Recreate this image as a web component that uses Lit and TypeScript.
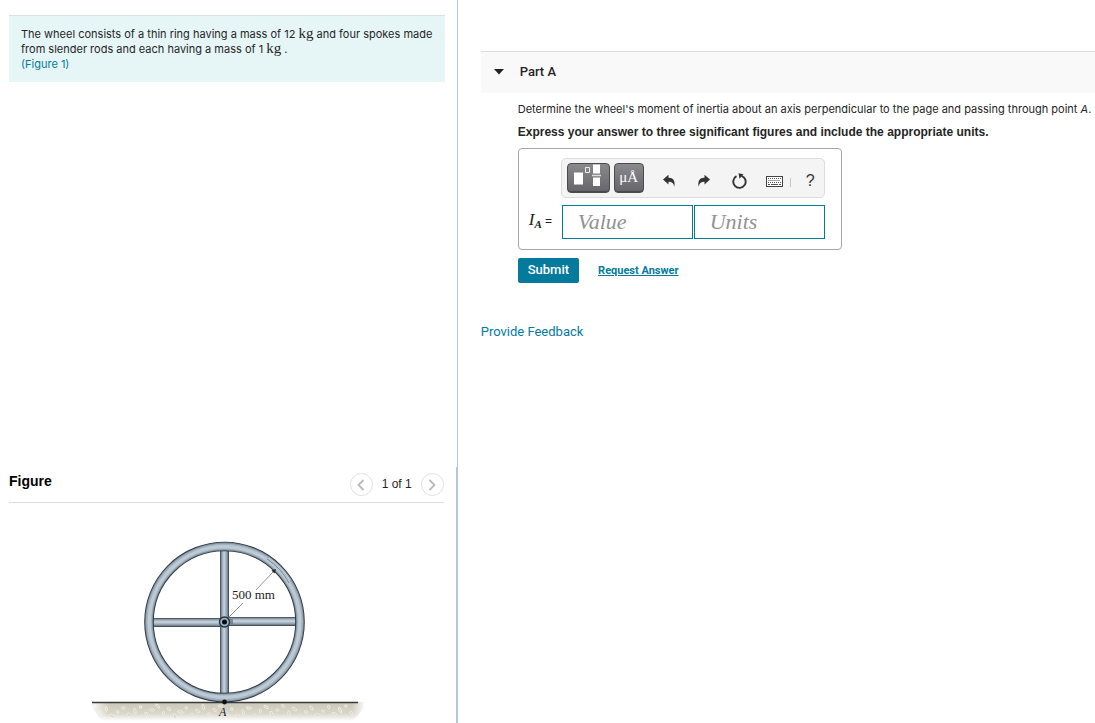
import { LitElement, html, css, svg } from "lit";
import { customElement, state } from "lit/decorators.js";

@customElement("wheel-figure")
class WheelFigure extends LitElement {
  static styles = css`
    :host {
      display: block;
    }
    svg {
      display: block;
      margin: 0 auto;
    }
    .label {
      font-family: "Liberation Serif", serif;
      font-size: 13px;
      fill: #1c1c1c;
    }
    .point {
      font-size: 12px;
      font-style: italic;
    }
  `;

  private pebbles() {
    const stones = [];
    for (let i = 0; i < 46; i++) {
      const x = 9 + i * 5.7;
      const y = 171 + ((i * 7) % 11);
      const rx = 1.3 + ((i * 5) % 4) * 0.5;
      const ry = 1.1 + ((i * 3) % 3) * 0.6;
      stones.push(
        svg`<ellipse cx=${x} cy=${y} rx=${rx} ry=${ry} transform="rotate(${(i * 37) % 90} ${x} ${y})"></ellipse>`
      );
    }
    return stones;
  }

  render() {
    return html`
      <svg width="281" height="188" viewBox="0 0 281 188" role="img" aria-label="Four-spoke wheel of radius 500 mm resting on the ground at A">
        <defs>
          <linearGradient id="vertical-rod" x1="0" x2="1" y1="0" y2="0">
            <stop offset="0" stop-color="#39444f"></stop>
            <stop offset=".16" stop-color="#7f8e9b"></stop>
            <stop offset=".45" stop-color="#c9d7e2"></stop>
            <stop offset=".8" stop-color="#8797a5"></stop>
            <stop offset="1" stop-color="#303a44"></stop>
          </linearGradient>
          <linearGradient id="horizontal-rod" x1="0" x2="0" y1="0" y2="1">
            <stop offset="0" stop-color="#303a44"></stop>
            <stop offset=".18" stop-color="#91a1ae"></stop>
            <stop offset=".45" stop-color="#cbd8e2"></stop>
            <stop offset=".8" stop-color="#8595a2"></stop>
            <stop offset="1" stop-color="#2d363e"></stop>
          </linearGradient>
          <linearGradient id="soil" x1="0" x2="0" y1="0" y2="1">
            <stop offset="0" stop-color="#cbc8b8"></stop>
            <stop offset=".6" stop-color="#d9d7ca"></stop>
            <stop offset="1" stop-color="#ffffff"></stop>
          </linearGradient>
          <linearGradient id="edge-fade" x1="0" x2="1" y1="0" y2="0">
            <stop offset="0" stop-color="#000"></stop>
            <stop offset=".07" stop-color="#fff"></stop>
            <stop offset=".95" stop-color="#fff"></stop>
            <stop offset="1" stop-color="#000"></stop>
          </linearGradient>
          <mask id="soil-mask"><rect x="3" y="166" width="277" height="22" fill="url(#edge-fade)"></rect></mask>
        </defs>

        <g mask="url(#soil-mask)">
          <path d="M4 167H279Q277 178 266 186H16Q8 177 4 167Z" fill="url(#soil)"></path>
          <g fill="#d2cebd" stroke="#f1efe4" stroke-width=".9">${this.pebbles()}</g>
        </g>
        <path d="M6 167.5H272" stroke="#3a3a38" stroke-width="1.3"></path>

        <rect x="134" y="12" width="9" height="150" fill="url(#vertical-rod)"></rect>
        <rect x="66" y="83" width="73" height="9" fill="url(#horizontal-rod)"></rect>
        <rect x="139" y="82" width="73" height="9" fill="url(#horizontal-rod)"></rect>

        <g fill="none">
          <circle cx="138.500" cy="87" r="75.500" stroke="#2f3841" stroke-width="9.600"></circle>
          <circle cx="138.500" cy="87" r="75.500" stroke="#7c8b98" stroke-width="7.800"></circle>
          <circle cx="138.500" cy="87" r="75.500" stroke="#a3b2be" stroke-width="6"></circle>
          <circle cx="138.500" cy="87" r="75.300" stroke="#bccad5" stroke-width="3.400"></circle>
        </g>
        <path d="M181 24Q195 33 203 48" fill="none" stroke="#697783" stroke-width=".8"></path>
        <path d="M183 23Q197 33 204 45" fill="none" stroke="#dbe4eb" stroke-width=".7"></path>

        <path d="M142 83L157 68M170 55L188 36" stroke="#77777a" stroke-width=".8"></path>
        <path d="M190 34L188.500 38.500L185.500 35.500Z" fill="#222"></path>
        <rect x="143" y="84" width="4" height="5" fill="#59656f" opacity=".6"></rect>
        <circle cx="138.500" cy="87" r="5" fill="#9db3c5" stroke="#273541" stroke-width="1.400"></circle>
        <circle cx="138.500" cy="87" r="2.500" fill="#080c10"></circle>
        <circle cx="138.500" cy="167" r="2.400" fill="#111"></circle>
        <text class="label" x="146" y="64">500 mm</text>
        <text class="label point" x="133" y="181">A</text>
      </svg>
    `;
  }
}

@customElement("answer-box")
class AnswerBox extends LitElement {
  static styles = css`
    :host {
      display: block;
    }
    * {
      box-sizing: border-box;
    }
    .box {
      width: fit-content;
      padding: 9px 16px 10px 10px;
      border: 1px solid #a6a6a6;
      border-radius: 4px;
      display: grid;
      grid-template-columns: 33px 263px;
      row-gap: 7px;
      align-items: center;
    }
    .toolbar {
      grid-column: 2;
      height: 40px;
      margin-left: -1px;
      width: 264px;
      padding: 0 0 0 5px;
      border: 1px solid #dcdcdc;
      border-radius: 5px;
      background: #f4f4f4;
      display: flex;
      align-items: center;
    }
    button {
      font: inherit;
      padding: 0;
      border: 0;
      background: none;
      color: #333;
      flex: none;
    }
    .dark {
      height: 30px;
      border: 1px solid #4b4b4e;
      border-radius: 4px;
      background: linear-gradient(#8a8a8e, #66666a);
      box-shadow: inset 0 -1px 0 #49494c;
      color: #fff;
      margin-right: 4px;
      display: flex;
      justify-content: center;
    }
    .templates {
      width: 43px;
    }
    .symbols {
      width: 30px;
      font: 15px/26px "Liberation Serif", serif;
    }
    .tool {
      width: 35px;
      height: 30px;
      display: flex;
      align-items: center;
      justify-content: center;
      padding-top: 6px;
    }
    .tool.first {
      margin-left: 4px;
    }
    .bar {
      flex: none;
      width: 1px;
      height: 9px;
      margin-top: 8px;
      margin-left: -2px;
      background: #c6c6c6;
    }
    .help {
      font: 16px/24px "Liberation Sans", sans-serif;
      width: 39px;
    }
    .symbol {
      padding-bottom: 3px;
      font: 12px/20px "Liberation Sans", sans-serif;
      color: #222;
      white-space: nowrap;
    }
    .symbol i {
      font: italic 17px/20px "Liberation Serif", serif;
    }
    .symbol sub {
      font: italic bold 11px/10px "Liberation Serif", serif;
      vertical-align: -3px;
    }
    .fields {
      display: grid;
      grid-template-columns: 1fr 1fr;
      gap: 1px;
    }
    input {
      width: 100%;
      min-width: 0;
      height: 34px;
      padding: 0 15px;
      border: 1px solid #047a9c;
      border-radius: 0;
      background: #fff;
      color: #222;
      font: 22px/30px "Liberation Serif", serif;
    }
    input::placeholder {
      color: #929292;
      opacity: 1;
      font-style: italic;
    }
  `;

  render() {
    return html`
      <div class="box">
        <div class="toolbar" role="toolbar">
          <button class="dark templates" aria-label="Templates">
            <svg width="31" height="28" viewBox="0 0 31 28">
              <path d="M1 8.500h9v12H1zM20 .5h7v9h-7zM20 13.500h7v8.500h-7z" fill="#fff"></path>
              <path d="M19 11.500h9" stroke="#ddd" stroke-width="1.500"></path>
              <path d="M12.500 3.500h4v5h-4z" fill="none" stroke="#eee"></path>
            </svg>
          </button>
          <button class="dark symbols" aria-label="Symbols">μÅ</button>
          <button class="tool first" aria-label="Undo">
            <svg width="14" height="14" viewBox="0 0 14 14">
              <path d="M1 5.500L6.500 .8V3.800C11 3.600 13.500 6.800 12.300 12.800C11.800 9.300 10 7.700 6.500 7.800V10.500Z" fill="#333"></path>
            </svg>
          </button>
          <button class="tool" aria-label="Redo">
            <svg width="14" height="14" viewBox="0 0 14 14">
              <path d="M13 5.500L7.500 .8V3.800C3 3.600 .5 6.800 1.700 12.800C2.200 9.300 4 7.700 7.500 7.800V10.500Z" fill="#333"></path>
            </svg>
          </button>
          <button class="tool" aria-label="Reset">
            <svg width="16" height="16" viewBox="0 0 16 16">
              <path d="M10.500 2.800A6.200 6.200 0 1 1 5.500 3.200" fill="none" stroke="#333" stroke-width="1.900"></path>
              <path d="M7.500 .2L12.500 1.200L8.500 5.800Z" fill="#333"></path>
            </svg>
          </button>
          <button class="tool" aria-label="Keyboard">
            <svg width="17" height="11" viewBox="0 0 17 11">
              <rect x=".5" y=".5" width="16" height="10" fill="#fff" stroke="#444"></rect>
              <path d="M2 2.500h13M2.500 4.500h12M2 6.500h13" stroke="#555" stroke-dasharray="1 1"></path>
              <path d="M2 8.500h2M5 8.500h7M13 8.500h2" stroke="#555"></path>
            </svg>
          </button>
          <span class="bar"></span>
          <button class="tool help" aria-label="Help">?</button>
        </div>
        <label class="symbol" for="value"><i>I</i><sub>A</sub> =</label>
        <div class="fields">
          <input id="value" placeholder="Value" />
          <input aria-label="Units" placeholder="Units" />
        </div>
      </div>
    `;
  }
}

@customElement("app-root")
class AppRoot extends LitElement {
  @state() private open = true;

  static styles = css`
    :host {
      display: block;
      font: 12px/15px "Liberation Sans", Arial, sans-serif;
      color: #252525;
      background: #fff;
    }
    * {
      box-sizing: border-box;
    }
    a {
      color: #047a9c;
      text-decoration: none;
    }
    h2,
    p {
      margin: 0;
    }
    button {
      font: inherit;
      color: inherit;
      border: 0;
      padding: 0;
      background: none;
    }
    .page {
      display: grid;
      grid-template-columns: 41.8% minmax(0, 1fr);
      min-height: 100vh;
    }
    .left {
      display: grid;
      grid-template-rows: 1fr auto;
    }
    .problem {
      padding: 15px 12px 0 9px;
      border-right: 1px solid #b9c6d9;
    }
    .statement {
      padding: 11px 8px 10px 12px;
      border-top: 1px solid #d9e2e2;
      background: #e6f6f7;
    }
    .statement,
    .question {
      font-family: Inter, "Liberation Sans", sans-serif;
      font-size: 11px;
    }
    .unit {
      font: 15px/12px "Liberation Serif", serif;
    }
    .figure {
      padding: 0 12px 0 9px;
      border-right: 2px solid #b4c7dd;
    }
    .figure-head {
      display: flex;
      justify-content: space-between;
      align-items: center;
      height: 36px;
      border-bottom: 1px solid #dcdcdc;
    }
    h2.figure-title {
      font-size: 14px;
      line-height: 16px;
      color: #000;
      padding-bottom: 7px;
    }
    .pager {
      display: flex;
      align-items: center;
      gap: 9px;
    }
    .page-button {
      width: 23px;
      height: 23px;
      border: 1px solid #e1e1e1;
      border-radius: 50%;
      display: flex;
      align-items: center;
      justify-content: center;
    }
    .drawing {
      padding-top: 32px;
    }
    .right {
      padding: 51px 0 0 23px;
    }
    .part-head {
      height: 42px;
      border-top: 1px solid #dcdcdc;
      background: #f9f9f9;
    }
    .part-toggle {
      display: flex;
      align-items: center;
      gap: 16px;
      width: 100%;
      height: 40px;
      padding-left: 13px;
      font: 500 13px/16px Roboto, "Liberation Sans", sans-serif;
    }
    .part-body {
      padding: 9px 0 0 37px;
    }
    .instruction {
      padding: 8px 0;
      font-weight: bold;
    }
    .actions {
      display: flex;
      align-items: center;
      gap: 19px;
      padding-top: 8px;
    }
    .submit {
      height: 25px;
      padding: 0 10px 2px;
      border-radius: 2px;
      background: #047a9c;
      color: #fff;
      font: 500 13px/16px Roboto, "Liberation Sans", sans-serif;
    }
    .request {
      font: bold 11px/15px Roboto, "Liberation Sans", sans-serif;
      text-decoration: underline;
    }
    .feedback {
      display: block;
      width: fit-content;
      margin-top: 41px;
      font: 13px/15px Roboto, "Liberation Sans", sans-serif;
    }
  `;

  render() {
    return html`
      <div class="page">
        <div class="left">
          <section class="problem">
            <div class="statement">
              The wheel consists of a thin ring having a mass of 12 <span class="unit">kg</span> and four spokes made
              from slender rods and each having a mass of 1 <span class="unit">kg</span> .<br />
              <a href="#figure">(Figure 1)</a>
            </div>
          </section>
          <section class="figure" id="figure">
            <div class="figure-head">
              <h2 class="figure-title">Figure</h2>
              <div class="pager">
                <button class="page-button" aria-label="Previous figure">
                  <svg width="8" height="12" viewBox="0 0 8 12"><path d="M6.500 1L1.500 6L6.500 11" fill="none" stroke="#b9b9b9" stroke-width="1.800"></path></svg>
                </button>
                <span>1 of 1</span>
                <button class="page-button" aria-label="Next figure">
                  <svg width="8" height="12" viewBox="0 0 8 12"><path d="M1.500 1L6.500 6L1.500 11" fill="none" stroke="#b9b9b9" stroke-width="1.800"></path></svg>
                </button>
              </div>
            </div>
            <div class="drawing"><wheel-figure></wheel-figure></div>
          </section>
        </div>
        <main class="right">
          <div class="part-head">
            <button class="part-toggle" aria-expanded=${this.open} @click=${() => (this.open = !this.open)}>
              <svg width="10" height="6" viewBox="0 0 10 6"><path d="M0 0H10L5 5.500Z" fill="#222"></path></svg>
              Part A
            </button>
          </div>
          <div class="part-body" ?hidden=${!this.open}>
            <p class="question">Determine the wheel's moment of inertia about an axis perpendicular to the page and passing through point <i>A</i>.</p>
            <p class="instruction">Express your answer to three significant figures and include the appropriate units.</p>
            <answer-box></answer-box>
            <div class="actions">
              <button class="submit">Submit</button>
              <a class="request" href="#request">Request Answer</a>
            </div>
          </div>
          <a class="feedback" href="#feedback">Provide Feedback</a>
        </main>
      </div>
    `;
  }
}
